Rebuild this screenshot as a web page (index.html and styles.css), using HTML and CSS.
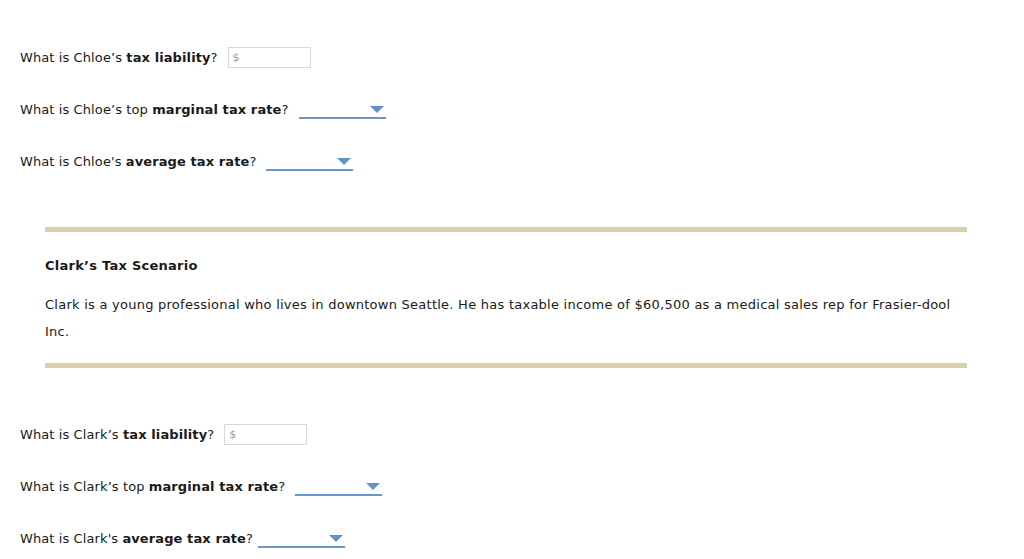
FILE: index.html
```html
<!DOCTYPE html>
<html>
<head>
    <link rel="stylesheet" href="styles.css">
</head>
<body>
    <div class="question first">
        <span>What is Chloe’s <b>tax liability</b>?</span>
        <div class="money"><span class="dollar">$</span></div>
    </div>
    <div class="question">
        <span>What is Chloe’s top <b>marginal tax rate</b>?</span>
        <div class="dropdown"><span class="arrow"></span></div>
    </div>
    <div class="question">
        <span>What is Chloe's <b>average tax rate</b>?</span>
        <div class="dropdown"><span class="arrow"></span></div>
    </div>

    <div class="scenario">
        <div class="scenario-title">Clark’s Tax Scenario</div>
        <p class="scenario-text">Clark is a young professional who lives in downtown Seattle. He has taxable income of $60,500 as a medical sales rep for Frasier-dool Inc.</p>
    </div>

    <div class="question first">
        <span>What is Clark’s <b>tax liability</b>?</span>
        <div class="money"><span class="dollar">$</span></div>
    </div>
    <div class="question">
        <span>What is Clark’s top <b>marginal tax rate</b>?</span>
        <div class="dropdown"><span class="arrow"></span></div>
    </div>
    <div class="question">
        <span>What is Clark's <b>average tax rate</b>?</span>
        <div class="dropdown snug"><span class="arrow"></span></div>
    </div>
</body>
</html>
```

FILE: styles.css
```css
body {
    margin: 0;
    padding: 46px 0 0 20px;
    font-family: "DejaVu Sans", Verdana, sans-serif;
    font-size: 13px;
    color: #1a1a1a;
    background: #fff;
}
.question {
    display: flex;
    align-items: center;
    height: 22px;
    margin-top: 30px;
    letter-spacing: 0.1px;
}
.question.first {
    margin-top: 0;
}
.money {
    width: 77px;
    height: 19px;
    margin-left: 10px;
    border: 1px solid #d8d8d8;
    display: flex;
    align-items: center;
    padding-left: 4px;
}
.dollar {
    color: #9a9a9a;
    font-size: 11px;
}
.dropdown {
    width: 85px;
    height: 16px;
    margin-left: 10px;
    margin-top: 2px;
    border-bottom: 2px solid #6898c9;
    display: flex;
    justify-content: flex-end;
    align-items: flex-start;
    padding-right: 2px;
}
.dropdown.snug {
    margin-left: 5px;
}
.arrow {
    width: 0;
    height: 0;
    margin-top: 5px;
    border-left: 7px solid transparent;
    border-right: 7px solid transparent;
    border-top: 7px solid #5f93c9;
}
.scenario {
    margin: 55px 0 55px 25px;
    width: 922px;
    border-top: 5px solid #d9d0ab;
    border-bottom: 5px solid #d9d0ab;
    padding: 25px 0 18px 0;
    letter-spacing: 0.25px;
}
.scenario-title {
    font-weight: bold;
    line-height: 18px;
}
.scenario-text {
    margin: 16px 0 0 0;
    line-height: 27px;
}
```
